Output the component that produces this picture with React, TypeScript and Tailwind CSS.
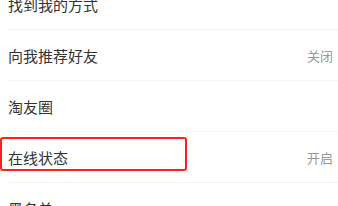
import React from 'react';

interface SettingRow {
  label: string;
  value?: string;
  highlight?: boolean;
}

const rows: SettingRow[] = [
  { label: '找到我的方式' },
  { label: '向我推荐好友', value: '关闭' },
  { label: '淘友圈' },
  { label: '在线状态', value: '开启', highlight: true },
  { label: '黑名单' },
];

const App: React.FC = () => {
  return (
    <div
      className="w-[338px] h-[206px] overflow-hidden bg-white"
      style={{ fontFamily: '"Noto Sans CJK SC", "Noto Sans", sans-serif' }}
    >
      <div className="-mt-[21px]">
        {rows.map((row) => (
          <div key={row.label} className="relative pl-2">
            <div className="flex h-[51px] items-center justify-between border-b border-[#f3f3f3] pr-[5px]">
              <span className="text-[15px] leading-none text-[#333333]">{row.label}</span>
              {row.value && (
                <span className="text-[13px] leading-none text-[#999999]">{row.value}</span>
              )}
            </div>
            {row.highlight && (
              <div className="pointer-events-none absolute left-0 top-[5px] h-[34px] w-[187px] rounded-[3px] border-2 border-[#ff1f1f]" />
            )}
          </div>
        ))}
      </div>
    </div>
  );
};

export default App;
